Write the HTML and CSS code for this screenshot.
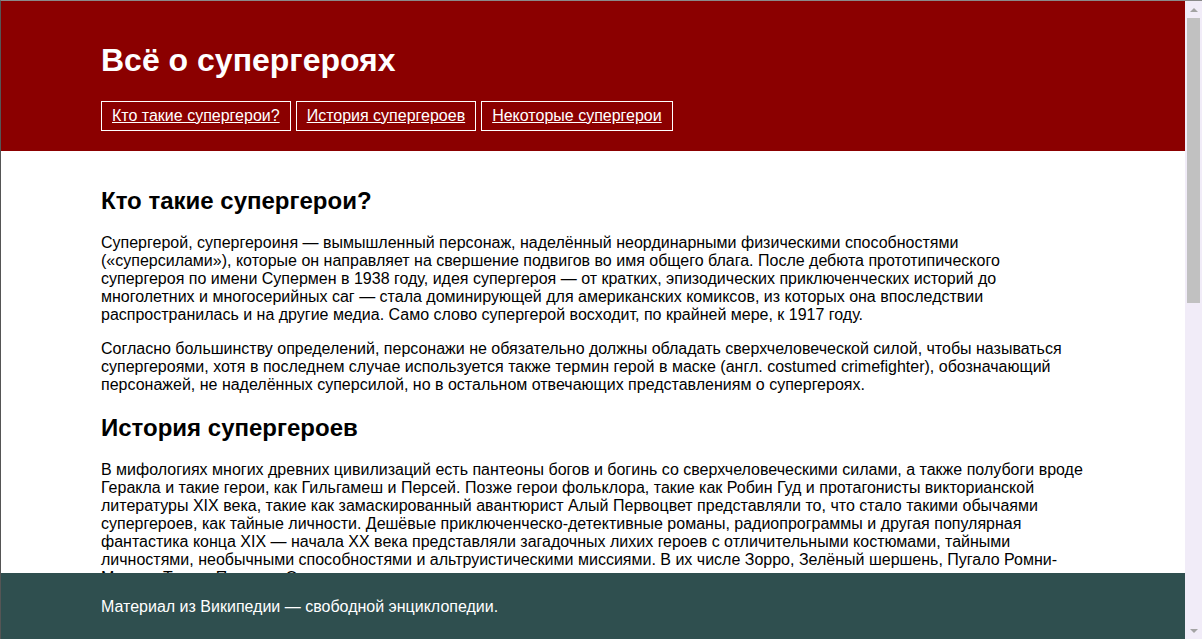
FILE: index.html
```html
<!DOCTYPE html>
<html lang="ru">
<head>
<meta charset="utf-8">
<title>Всё о супергероях</title>
<link rel="stylesheet" href="styles.css">
</head>
<body>
<header class="site-header">
  <h1 class="site-title">Всё о супергероях</h1>
  <nav class="site-nav">
    <a class="nav-link" href="#who">Кто такие супергерои?</a>
    <a class="nav-link" href="#history">История супергероев</a>
    <a class="nav-link" href="#some">Некоторые супергерои</a>
  </nav>
</header>
<main class="content">
  <section id="who">
    <h2 class="section-title">Кто такие супергерои?</h2>
    <p class="text">Супергерой, супергероиня — вымышленный персонаж, наделённый неординарными физическими способностями («суперсилами»), которые он направляет на свершение подвигов во имя общего блага. После дебюта прототипического супергероя по имени Супермен в 1938 году, идея супергероя — от кратких, эпизодических приключенческих историй до многолетних и многосерийных саг — стала доминирующей для американских комиксов, из которых она впоследствии распространилась и на другие медиа. Само слово супергерой восходит, по крайней мере, к 1917 году.</p>
    <p class="text">Согласно большинству определений, персонажи не обязательно должны обладать сверхчеловеческой силой, чтобы называться супергероями, хотя в последнем случае используется также термин герой в маске (англ. costumed crimefighter), обозначающий персонажей, не наделённых суперсилой, но в остальном отвечающих представлениям о супергероях.</p>
  </section>
  <section id="history">
    <h2 class="section-title">История супергероев</h2>
    <p class="text">В мифологиях многих древних цивилизаций есть пантеоны богов и богинь со сверхчеловеческими силами, а также полубоги вроде Геракла и такие герои, как Гильгамеш и Персей. Позже герои фольклора, такие как Робин Гуд и протагонисты викторианской литературы XIX века, такие как замаскированный авантюрист Алый Первоцвет представляли то, что стало такими обычаями супергероев, как тайные личности. Дешёвые приключенческо-детективные романы, радиопрограммы и другая популярная фантастика конца XIX — начала XX века представляли загадочных лихих героев с отличительными костюмами, тайными личностями, необычными способностями и альтруистическими миссиями. В их числе Зорро, Зелёный шершень, Пугало Ромни-Марша, Тень и Призрак. Эти персонажи стали непосредственными предшественниками супергероев комиксов.</p>
    <p class="text">В 1938 году в первом выпуске журнала Action Comics появился Супермен, созданный Джерри Сигелом и Джо Шустером. Успех персонажа положил начало так называемому Золотому веку комиксов, в течение которого были созданы Бэтмен, Чудо-женщина, Капитан Америка, Флэш и многие другие герои. После спада интереса в послевоенные годы жанр пережил возрождение в Серебряном веке, когда издательство Marvel Comics представило Фантастическую четвёрку, Человека-паука, Халка и Людей Икс.</p>
  </section>
  <section id="some">
    <h2 class="section-title">Некоторые супергерои</h2>
    <p class="text">Супермен — инопланетянин с планеты Криптон, обладающий сверхсилой, неуязвимостью, способностью летать и множеством других сверхспособностей. В обычной жизни он скрывается под личиной журналиста Кларка Кента.</p>
    <p class="text">Бэтмен — миллиардер Брюс Уэйн, который после гибели родителей посвятил жизнь борьбе с преступностью в Готэм-Сити. Он не обладает сверхспособностями, но полагается на интеллект, навыки детектива, боевые искусства и технологии.</p>
    <p class="text">Чудо-женщина — амазонская принцесса Диана с острова Фемискира, наделённая сверхчеловеческой силой, скоростью и выносливостью, а также владеющая Лассо истины и неразрушимыми браслетами.</p>
    <p class="text">Человек-паук — школьник Питер Паркер, получивший после укуса радиоактивного паука способности лазать по стенам, сверхсилу и «паучье чутьё». Его девиз: «С большой силой приходит большая ответственность».</p>
  </section>
</main>
<footer class="site-footer">
  <p class="footer-text">Материал из Википедии — свободной энциклопедии.</p>
</footer>
<div class="scrollbar" aria-hidden="true">
  <span class="scroll-arrow scroll-arrow-up"></span>
  <span class="scroll-track"><span class="scroll-thumb"></span></span>
  <span class="scroll-arrow scroll-arrow-down"></span>
</div>
</body>
</html>
```
FILE: styles.css
```css
html {
  border-top: 1px solid #8a8a8a;
  border-left: 1px solid #555555;
}
body {
  margin: 0 17px 0 0;
  font-family: "Liberation Sans", Arial, sans-serif;
  font-size: 16px;
  color: #000;
  background: #fff;
}
.site-header {
  background: #8b0000;
  color: #fff;
  padding: 20px 100px;
}
.site-title {
  font-size: 32px;
  font-weight: bold;
  margin: 21.44px 0;
}
.site-nav {
  display: flex;
  gap: 5px;
}
.nav-link {
  display: block;
  color: #fff;
  text-decoration: underline;
  border: 1px solid #fff;
  padding: 5px 10px;
  line-height: 18px;
}
.content {
  padding: 16px 100px 90px;
}
.section-title {
  font-size: 24px;
  font-weight: bold;
  line-height: 27px;
  margin: 19.92px 0;
}
.text {
  line-height: 18px;
  margin: 16px 0;
}
.site-footer {
  position: fixed;
  left: 1px;
  right: 17px;
  bottom: 0;
  background: #2f4f4f;
  color: #fff;
  padding: 25px 100px 23px;
}
.footer-text {
  margin: 0;
  line-height: 18px;
}

/* fake classic scrollbar overlay */
.scrollbar {
  position: fixed;
  top: 0;
  right: 0;
  bottom: 0;
  width: 17px;
  border-top: 1px solid #8a8a8a;
  background: #f1ecf8;
  display: flex;
  flex-direction: column;
  align-items: center;
}
.scroll-arrow {
  height: 17px;
  width: 17px;
  display: flex;
  align-items: center;
  justify-content: center;
  flex: none;
}
.scroll-arrow::before {
  content: "";
  width: 0;
  height: 0;
  border-left: 4px solid transparent;
  border-right: 4px solid transparent;
}
.scroll-arrow-up::before {
  border-bottom: 4px solid #a3a3a3;
}
.scroll-arrow-down::before {
  border-top: 4px solid #a3a3a3;
}
.scroll-track {
  flex: 1;
  width: 17px;
  display: flex;
  justify-content: center;
}
.scroll-thumb {
  width: 13px;
  height: 285px;
  background: #c1c1c1;
}
```
